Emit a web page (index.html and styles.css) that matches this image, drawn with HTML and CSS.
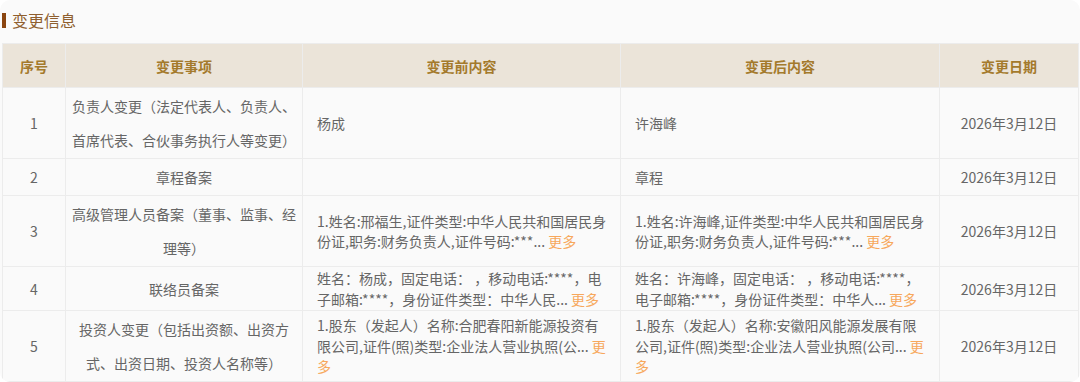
FILE: index.html
```html
<!DOCTYPE html>
<html lang="zh-CN">
<head>
<meta charset="utf-8">
<title>变更信息</title>
<link rel="stylesheet" href="styles.css">
</head>
<body>
<div class="card">
  <div class="title"><span class="bar"></span><span class="title-text">变更信息</span></div>
  <table class="tbl">
    <colgroup>
      <col class="c-no">
      <col class="c-item">
      <col class="c-before">
      <col class="c-after">
      <col class="c-date">
    </colgroup>
    <thead>
      <tr class="head">
        <th>序号</th>
        <th>变更事项</th>
        <th>变更前内容</th>
        <th>变更后内容</th>
        <th>变更日期</th>
      </tr>
    </thead>
    <tbody>
      <tr>
        <td class="no">1</td>
        <td class="item">负责人变更（法定代表人、负责人、首席代表、合伙事务执行人等变更）</td>
        <td class="txt">杨成</td>
        <td class="txt">许海峰</td>
        <td class="date">2026年3月12日</td>
      </tr>
      <tr>
        <td class="no">2</td>
        <td class="item">章程备案</td>
        <td class="txt"></td>
        <td class="txt">章程</td>
        <td class="date">2026年3月12日</td>
      </tr>
      <tr>
        <td class="no">3</td>
        <td class="item">高级管理人员备案（董事、监事、经理等）</td>
        <td class="txt">1.姓名:邢福生,证件类型:中华人民共和国居民身份证,职务:财务负责人,证件号码:***... <span class="more">更多</span></td>
        <td class="txt">1.姓名:许海峰,证件类型:中华人民共和国居民身份证,职务:财务负责人,证件号码:***... <span class="more">更多</span></td>
        <td class="date">2026年3月12日</td>
      </tr>
      <tr>
        <td class="no">4</td>
        <td class="item">联络员备案</td>
        <td class="txt">姓名：杨成，固定电话：&nbsp;，移动电话:****，电子邮箱:****，身份证件类型：中华人民... <span class="more">更多</span></td>
        <td class="txt">姓名：许海峰，固定电话：&nbsp;，移动电话:****，电子邮箱:****，身份证件类型：中华人... <span class="more">更多</span></td>
        <td class="date">2026年3月12日</td>
      </tr>
      <tr>
        <td class="no">5</td>
        <td class="item">投资人变更（包括出资额、出资方式、出资日期、投资人名称等）</td>
        <td class="txt">1.股东（发起人）名称:合肥春阳新能源投资有限公司,证件(照)类型:企业法人营业执照(公... <span class="more">更多</span></td>
        <td class="txt">1.股东（发起人）名称:安徽阳风能源发展有限公司,证件(照)类型:企业法人营业执照(公司... <span class="more">更多</span></td>
        <td class="date">2026年3月12日</td>
      </tr>
    </tbody>
  </table>
</div>
</body>
</html>
```

FILE: styles.css
```css
html, body {
  margin: 0;
  padding: 0;
  background: #ffffff;
}
body {
  font-family: "Noto Sans CJK SC", "Microsoft YaHei", "Noto Sans", sans-serif;
  font-size: 14px;
  color: #666666;
}
.card {
  width: 1080px;
  height: 382px;
  box-sizing: border-box;
  background: #fafafa;
  border-radius: 10px;
  overflow: hidden;
  padding: 0 2px;
}
.title {
  display: flex;
  align-items: center;
  height: 43px;
  padding-bottom: 3px;
  box-sizing: border-box;
}
.bar {
  width: 4px;
  height: 15px;
  background: #8a4510;
  margin-right: 6px;
}
.title-text {
  font-size: 16px;
  line-height: 20px;
  color: #8f5f2f;
}
.tbl {
  width: 1076px;
  table-layout: fixed;
  border-collapse: collapse;
}
.c-no { width: 63px; }
.c-item { width: 237px; }
.c-before { width: 318px; }
.c-after { width: 319px; }
.c-date { width: 139px; }
.tbl th, .tbl td {
  border: 1px solid #ececec;
  vertical-align: middle;
}
.head th {
  height: 43px;
  padding: 0;
  background: #ebe4d9;
  color: #a47a2c;
  font-weight: bold;
  font-size: 14px;
  text-align: center;
}
.tbl td {
  padding: 1px 0;
  background: #fafafa;
}
.no, .date {
  text-align: center;
  line-height: 34px;
}
.item {
  text-align: center;
  line-height: 34px;
  padding-left: 6px !important;
  padding-right: 6px !important;
}
.txt {
  line-height: 20.5px;
  padding-left: 14px !important;
  padding-right: 12px !important;
  text-align: left;
}
.more {
  color: #f7a85c;
}
```
